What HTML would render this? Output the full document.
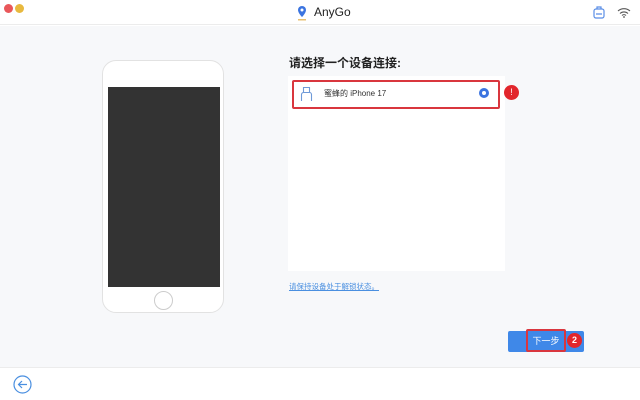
<!DOCTYPE html>
<html><head><meta charset="utf-8"><style>
*{margin:0;padding:0;box-sizing:border-box}
body{width:640px;height:400px;overflow:hidden;background:#fff;font-family:"Liberation Sans","Noto Sans CJK SC",sans-serif;position:relative}
.a{position:absolute}
</style></head><body>
<div class="a" style="left:0;top:0;width:640px;height:25px;background:#fff;border-bottom:1px solid #ececec"></div>
<div class="a" style="left:4px;top:4px;width:9px;height:9px;border-radius:50%;background:#e9575a"></div>
<div class="a" style="left:15px;top:4px;width:9px;height:9px;border-radius:50%;background:#e8b93e"></div>
<svg class="a" style="left:296px;top:5px" width="12" height="16" viewBox="0 0 12 16"><path d="M6 1a4 4 0 0 0-4 4c0 3 4 7 4 7s4-4 4-7a4 4 0 0 0-4-4z" fill="#3b74e0"/><circle cx="6" cy="5" r="1.5" fill="#fff"/><rect x="2" y="14" width="8" height="1.5" fill="#e8c070"/></svg>
<div class="a" style="left:314px;top:5px;font-size:12px;color:#222">AnyGo</div>
<svg class="a" style="left:593px;top:6px" width="12" height="13" viewBox="0 0 12 13"><rect x="1" y="3" width="10" height="9" rx="2" fill="none" stroke="#5a8ee6" stroke-width="1.2"/><path d="M4 3V1h4v2M3 8h6" stroke="#5a8ee6" stroke-width="1.2" fill="none"/></svg>
<svg class="a" style="left:617px;top:7px" width="14" height="11" viewBox="0 0 14 11"><path d="M1 4a9 9 0 0 1 12 0M3 6.5a6 6 0 0 1 8 0M5 8.5a3 3 0 0 1 4 0" stroke="#555" stroke-width="1.1" fill="none"/><circle cx="7" cy="10" r="0.9" fill="#555"/></svg>
<div class="a" style="left:0;top:26px;width:640px;height:342px;background:#f7f8fa;border-bottom:1px solid #ececec"></div>
<div class="a" style="left:102px;top:60px;width:122px;height:253px;background:#fff;border:1px solid #e2e2e2;border-radius:14px"></div>
<div class="a" style="left:108px;top:87px;width:112px;height:200px;background:#333"></div>
<div class="a" style="left:154px;top:291px;width:19px;height:19px;border-radius:50%;border:1px solid #ccc;background:#fff"></div>
<div class="a" style="left:289px;top:54px;font-size:12px;font-weight:bold;color:#222">请选择一个设备连接:</div>
<div class="a" style="left:288px;top:76px;width:217px;height:195px;background:#fff"></div>
<div class="a" style="left:292px;top:80px;width:208px;height:29px;border:2px solid #d9363e;border-radius:2px"></div>
<svg class="a" style="left:300px;top:86px" width="13" height="16" viewBox="0 0 13 16"><path d="M3.5 1.5h6v5h-6zM1.5 15V8.5a2 2 0 0 1 2-2h6a2 2 0 0 1 2 2V15" stroke="#6f9ad8" stroke-width="1.1" fill="none"/></svg>
<div class="a" style="left:324px;top:88px;font-size:8px;color:#333">蜜蜂的 iPhone 17</div>
<div class="a" style="left:479px;top:88px;width:10px;height:10px;border-radius:50%;border:3px solid #3b74e0;background:#fff"></div>
<div class="a" style="left:504px;top:85px;width:15px;height:15px;border-radius:50%;background:#e2262c;color:#fff;font-size:9px;text-align:center;line-height:15px">!</div>
<div class="a" style="left:289px;top:281px;font-size:7.5px;color:#4a8fe0;text-decoration:underline">请保持设备处于解锁状态。</div>
<div class="a" style="left:508px;top:331px;width:76px;height:21px;background:#3f88e8;border-radius:2px"></div>
<div class="a" style="left:526px;top:329px;width:40px;height:23px;border:2px solid #d9363e;border-radius:2px;color:#fff;font-size:9px;text-align:center;line-height:20px">下一步</div>
<div class="a" style="left:567px;top:333px;width:15px;height:15px;border-radius:50%;background:#e2262c;color:#fff;font-size:9px;font-weight:bold;text-align:center;line-height:15px">2</div>
<svg class="a" style="left:13px;top:375px" width="19" height="19" viewBox="0 0 19 19"><circle cx="9.5" cy="9.5" r="8.5" fill="none" stroke="#4a8fe0" stroke-width="1.2"/><path d="M14 9.5H5.5M9 6l-3.5 3.5L9 13" stroke="#4a8fe0" stroke-width="1.2" fill="none"/></svg>
</body></html>
